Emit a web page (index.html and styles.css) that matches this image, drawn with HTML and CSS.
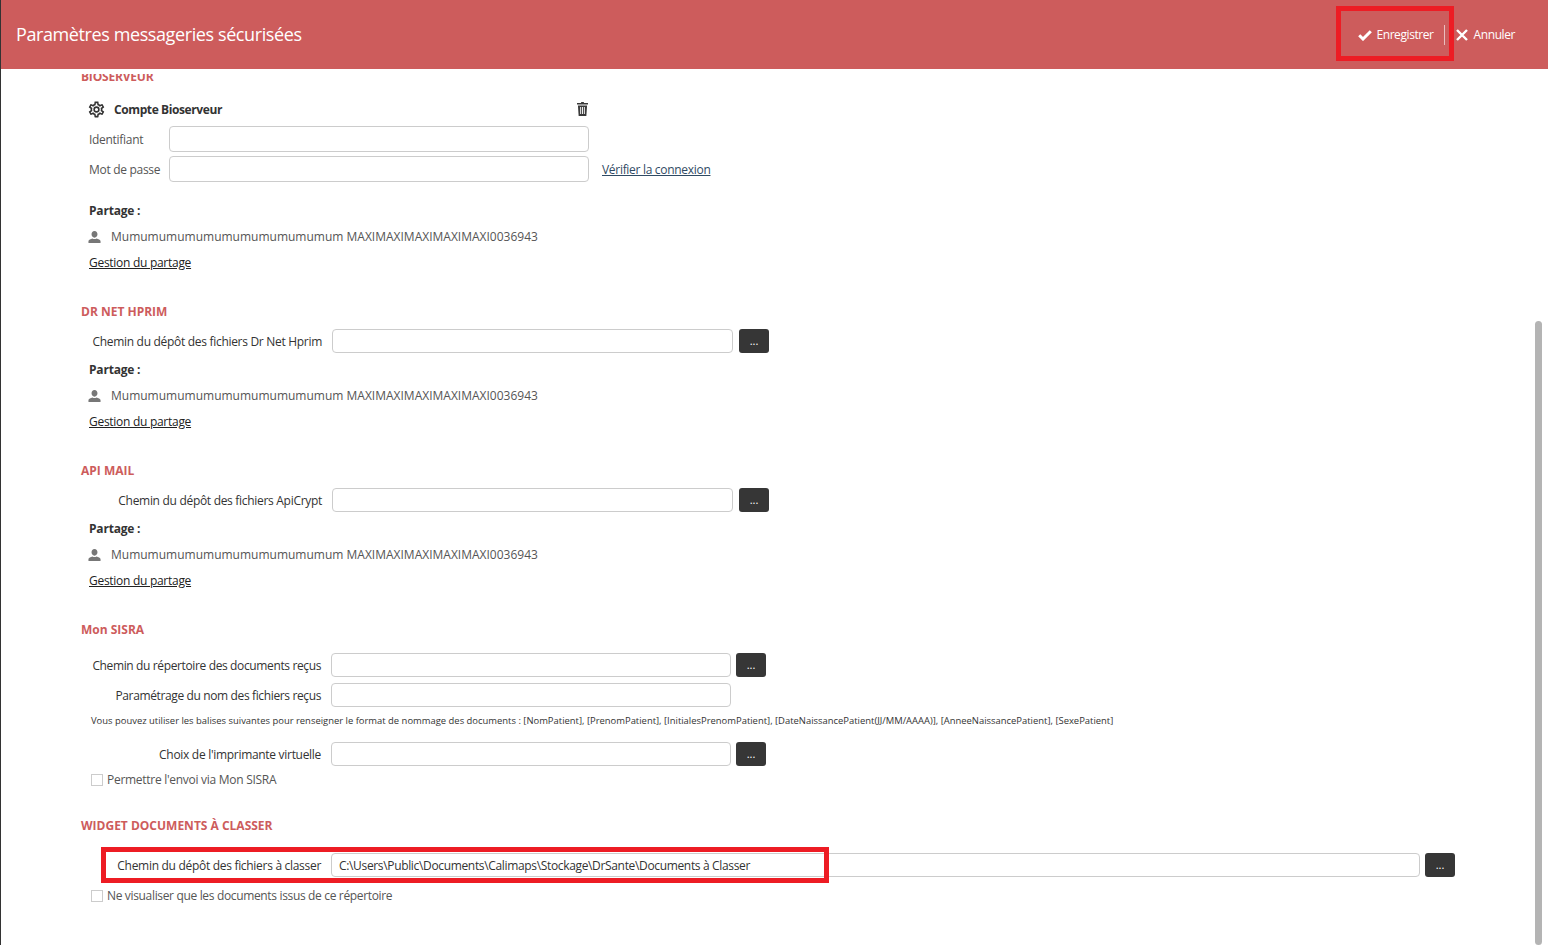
FILE: index.html
```html
<!DOCTYPE html>
<html lang="fr">
<head>
    <meta charset="UTF-8">
    <meta name="viewport" content="width=device-width, initial-scale=1.0">
    <title>Paramètres messageries sécurisées</title>
    <link rel="stylesheet" href="styles.css">
</head>
<body>
    <div class="window">
        <header class="topbar">
            <h1 class="topbar-title">Paramètres messageries sécurisées</h1>
            <div class="topbar-actions">
                <button class="action action-save" type="button">
                    <svg class="action-check" viewBox="0 0 14 12"><path d="M1.2 6.3 L5 10 L12.8 2.2" fill="none" stroke="#fff" stroke-width="3"/></svg>
                    Enregistrer
                </button>
                <span class="action-sep"></span>
                <button class="action" type="button">
                    <svg class="action-cross" viewBox="0 0 12 12"><path d="M1 1 L11 11 M11 1 L1 11" fill="none" stroke="#fff" stroke-width="2.4"/></svg>
                    Annuler
                </button>
            </div>
        </header>

        <main class="content">
            <section class="block block-first">
                <h2 class="block-title">BIOSERVEUR</h2>
                <div class="account">
                    <div class="account-head">
                        <svg class="icon-gear" viewBox="0 0 24 24"><path fill="#333" d="M12,8A4,4 0 0,1 16,12A4,4 0 0,1 12,16A4,4 0 0,1 8,12A4,4 0 0,1 12,8M12,10A2,2 0 0,0 10,12A2,2 0 0,0 12,14A2,2 0 0,0 14,12A2,2 0 0,0 12,10M10,22C9.75,22 9.54,21.82 9.5,21.58L9.13,18.93C8.5,18.68 7.96,18.34 7.44,17.94L4.95,18.95C4.73,19.03 4.46,18.95 4.34,18.73L2.34,15.27C2.21,15.05 2.27,14.78 2.46,14.63L4.57,12.97L4.5,12L4.57,11L2.46,9.37C2.27,9.22 2.21,8.95 2.34,8.73L4.34,5.27C4.46,5.05 4.73,4.96 4.95,5.05L7.44,6.05C7.96,5.66 8.5,5.32 9.13,5.07L9.5,2.42C9.54,2.18 9.75,2 10,2H14C14.25,2 14.46,2.18 14.5,2.42L14.87,5.07C15.5,5.32 16.04,5.66 16.56,6.05L19.05,5.05C19.27,4.96 19.54,5.05 19.66,5.27L21.66,8.73C21.79,8.95 21.73,9.22 21.54,9.37L19.43,11L19.5,12L19.43,13L21.54,14.63C21.73,14.78 21.79,15.05 21.66,15.27L19.66,18.73C19.54,18.95 19.27,19.04 19.05,18.95L16.56,17.95C16.04,18.34 15.5,18.68 14.87,18.93L14.5,21.58C14.46,21.82 14.25,22 14,22H10M11.25,4L10.88,6.61C9.68,6.86 8.62,7.5 7.85,8.39L5.44,7.35L4.69,8.65L6.8,10.2C6.4,11.37 6.4,12.64 6.8,13.8L4.68,15.36L5.43,16.66L7.86,15.62C8.63,16.5 9.68,17.14 10.87,17.38L11.24,20H12.76L13.13,17.39C14.32,17.14 15.37,16.5 16.14,15.62L18.57,16.66L19.32,15.36L17.2,13.81C17.6,12.64 17.6,11.37 17.2,10.2L19.31,8.65L18.56,7.35L16.15,8.39C15.38,7.5 14.32,6.86 13.12,6.62L12.75,4H11.25Z"/></svg>
                        <span class="account-name">Compte Bioserveur</span>
                        <svg class="icon-trash" viewBox="0 0 12 14" preserveAspectRatio="none"><path fill="#3a3a3a" fill-rule="evenodd" d="M4.5 0 H7.5 V1 H12 V2.6 H0 V1 H4.5 Z M1 3.4 H11 L10.2 14 H1.8 Z M3.5 5 V12 H4.5 V5 Z M5.5 5 V12 H6.5 V5 Z M7.5 5 V12 H8.5 V5 Z"/></svg>
                    </div>
                    <div class="login-row">
                        <label class="login-label">Identifiant</label>
                        <input class="login-input" type="text">
                    </div>
                    <div class="login-row">
                        <label class="login-label">Mot de passe</label>
                        <input class="login-input" type="password">
                        <a class="check-link" href="#">Vérifier la connexion</a>
                    </div>
                </div>
                <div class="share share-bio">
                    <div class="share-title">Partage :</div>
                    <div class="share-user">
                        <svg class="icon-user" viewBox="0 0 14 13" preserveAspectRatio="none"><path fill="#777" d="M7 0 C9 0 10.2 1.5 10.2 3.6 C10.2 5.6 9 7.2 7 7.2 C5 7.2 3.8 5.6 3.8 3.6 C3.8 1.5 5 0 7 0 Z M0.5 13 V10.8 C0.5 9.4 3 8.6 4.8 8 C6 8.8 8 8.8 9.2 8 C11 8.6 13.5 9.4 13.5 10.8 V13 Z"/></svg>
                        <span>Mumumumumumumumumumumumum MAXIMAXIMAXIMAXIMAXI0036943</span>
                    </div>
                    <a class="share-link" href="#">Gestion du partage</a>
                </div>
            </section>

            <section class="block">
                <h2 class="block-title">DR NET HPRIM</h2>
                <div class="field field-shift">
                    <label class="field-label">Chemin du dépôt des fichiers Dr Net Hprim</label>
                    <input class="field-input" type="text">
                    <button class="browse" type="button">...</button>
                </div>
                <div class="share">
                    <div class="share-title">Partage :</div>
                    <div class="share-user">
                        <svg class="icon-user" viewBox="0 0 14 13" preserveAspectRatio="none"><path fill="#777" d="M7 0 C9 0 10.2 1.5 10.2 3.6 C10.2 5.6 9 7.2 7 7.2 C5 7.2 3.8 5.6 3.8 3.6 C3.8 1.5 5 0 7 0 Z M0.5 13 V10.8 C0.5 9.4 3 8.6 4.8 8 C6 8.8 8 8.8 9.2 8 C11 8.6 13.5 9.4 13.5 10.8 V13 Z"/></svg>
                        <span>Mumumumumumumumumumumumum MAXIMAXIMAXIMAXIMAXI0036943</span>
                    </div>
                    <a class="share-link" href="#">Gestion du partage</a>
                </div>
            </section>

            <section class="block">
                <h2 class="block-title">API MAIL</h2>
                <div class="field field-shift">
                    <label class="field-label">Chemin du dépôt des fichiers ApiCrypt</label>
                    <input class="field-input" type="text">
                    <button class="browse" type="button">...</button>
                </div>
                <div class="share">
                    <div class="share-title">Partage :</div>
                    <div class="share-user">
                        <svg class="icon-user" viewBox="0 0 14 13" preserveAspectRatio="none"><path fill="#777" d="M7 0 C9 0 10.2 1.5 10.2 3.6 C10.2 5.6 9 7.2 7 7.2 C5 7.2 3.8 5.6 3.8 3.6 C3.8 1.5 5 0 7 0 Z M0.5 13 V10.8 C0.5 9.4 3 8.6 4.8 8 C6 8.8 8 8.8 9.2 8 C11 8.6 13.5 9.4 13.5 10.8 V13 Z"/></svg>
                        <span>Mumumumumumumumumumumumum MAXIMAXIMAXIMAXIMAXI0036943</span>
                    </div>
                    <a class="share-link" href="#">Gestion du partage</a>
                </div>
            </section>

            <section class="block">
                <h2 class="block-title block-title-sisra">Mon SISRA</h2>
                <div class="field">
                    <label class="field-label field-label-tight">Chemin du répertoire des documents reçus</label>
                    <input class="field-input" type="text">
                    <button class="browse" type="button">...</button>
                </div>
                <div class="field field-next">
                    <label class="field-label field-label-tight">Paramétrage du nom des fichiers reçus</label>
                    <input class="field-input" type="text">
                </div>
                <p class="hint">Vous pouvez utiliser les balises suivantes pour renseigner le format de nommage des documents : [NomPatient], [PrenomPatient], [InitialesPrenomPatient], [DateNaissancePatient(JJ/MM/AAAA)], [AnneeNaissancePatient], [SexePatient]</p>
                <div class="field">
                    <label class="field-label">Choix de l'imprimante virtuelle</label>
                    <input class="field-input" type="text">
                    <button class="browse" type="button">...</button>
                </div>
                <label class="check check-sisra"><span class="check-box"></span>Permettre l'envoi via Mon SISRA</label>
            </section>

            <section class="block block-widget">
                <h2 class="block-title block-title-widget">WIDGET DOCUMENTS À CLASSER</h2>
                <div class="field">
                    <label class="field-label">Chemin du dépôt des fichiers à classer</label>
                    <input class="field-input field-input-long" type="text" value="C:\Users\Public\Documents\Calimaps\Stockage\DrSante\Documents à Classer">
                    <button class="browse" type="button">...</button>
                </div>
                <label class="check check-widget"><span class="check-box"></span>Ne visualiser que les documents issus de ce répertoire</label>
            </section>
        </main>

        <div class="scroll-thumb"></div>
        <div class="mark mark-save"></div>
        <div class="mark mark-path"></div>
    </div>
</body>
</html>
```

FILE: styles.css
```css
* {
    box-sizing: border-box;
}
html, body {
    height: 100%;
    margin: 0;
    overflow: hidden;
}
body {
    font-family: "Open Sans", "Noto Sans", Arial, sans-serif;
    font-size: 12px;
    color: #333;
    background: #fff;
}
.window {
    position: relative;
    display: flex;
    flex-direction: column;
    height: 100vh;
    border-left: 1px solid #333;
}

/* top bar */
.topbar {
    flex: none;
    display: flex;
    justify-content: space-between;
    align-items: center;
    height: 69px;
    padding: 0 33px 0 15px;
    background: #cd5c5c;
    color: #fff;
}
.topbar-title {
    margin: 0 0 2px;
    font-size: 18px;
    font-weight: 400;
    letter-spacing: -0.4px;
}
.topbar-actions {
    display: flex;
    align-items: center;
}
.action {
    display: flex;
    align-items: center;
    padding: 0;
    border: none;
    background: none;
    color: #fff;
    font: inherit;
    letter-spacing: -0.42px;
}
.action-check {
    width: 14px;
    height: 12px;
    margin-right: 4px;
}
.action-cross {
    width: 12px;
    height: 12px;
    margin-right: 6px;
}
.action-sep {
    width: 1px;
    height: 20px;
    margin: 0 11px 0 10px;
    background: rgba(255, 255, 255, 0.6);
}

/* form */
.content {
    flex: 1;
    overflow: hidden;
    margin-top: 5px;
    padding-left: 80px;
}
.block {
    margin-top: 33px;
}
.block-first {
    margin-top: -5px;
}
.block-first .block-title {
    letter-spacing: -0.2px;
}
.block-widget {
    margin-top: 30px;
}
.block-title {
    margin: 0 0 9px;
    font-size: 12px;
    line-height: 16px;
    font-weight: 700;
    color: #cd5c5c;
}
.block-title-sisra {
    margin-bottom: 15px;
}
.block-title-widget {
    margin-bottom: 19px;
}

.account {
    margin-left: 8px;
    width: 500px;
}
.account-head {
    display: flex;
    align-items: center;
    height: 22px;
    margin-top: 13px;
    margin-bottom: 6px;
}
.icon-gear {
    width: 19px;
    height: 19px;
    margin-left: -2px;
}
.account-name {
    flex: 1;
    margin-left: 8px;
    font-weight: 700;
    letter-spacing: -0.4px;
}
.icon-trash {
    width: 11px;
    height: 14px;
    margin-right: 1px;
}
.login-row {
    display: flex;
    align-items: center;
    margin-top: 4px;
    white-space: nowrap;
    color: #555;
    letter-spacing: -0.3px;
}
.login-label {
    flex: none;
    width: 80px;
}
.login-input {
    flex: none;
    width: 420px;
    height: 26px;
    border: 1px solid #ccc;
    border-radius: 4px;
}
.check-link {
    margin-left: 13px;
    color: #2f4a63;
}

.share {
    margin: 9px 0 0 8px;
    line-height: 16px;
}
.share-bio {
    margin-top: 21px;
}
.share-title {
    font-weight: 700;
    letter-spacing: -0.2px;
}
.share-user {
    display: flex;
    align-items: center;
    margin-top: 10px;
    color: #555;
}
.icon-user {
    width: 13px;
    height: 12px;
    margin-left: -1px;
    margin-right: 10px;
}
.share-link {
    display: inline-block;
    margin-top: 10px;
    color: #222;
    letter-spacing: -0.28px;
}

.field {
    display: flex;
    align-items: center;
}
.field-next {
    margin-top: 6px;
}
.field-shift {
    padding-left: 1px;
}
.field-label {
    flex: none;
    width: 240px;
    margin-right: 10px;
    text-align: right;
    white-space: nowrap;
    letter-spacing: -0.3px;
}
.field-label-tight {
    letter-spacing: -0.37px;
}
.field-input {
    flex: none;
    width: 400px;
    height: 24px;
    padding: 0 7px;
    border: 1px solid #ccc;
    border-radius: 4px;
    font: inherit;
    letter-spacing: -0.34px;
    color: #333;
}
.field-input-long {
    width: 1089px;
}
.field-shift .field-input {
    width: 401px;
}
.browse {
    flex: none;
    width: 30px;
    height: 24px;
    margin-left: 5px;
    padding: 0;
    border: none;
    border-radius: 3px;
    background: #363636;
    color: #fff;
    font: inherit;
    font-size: 11px;
    line-height: 24px;
}
.field-shift .browse {
    margin-left: 6px;
}
.hint {
    margin: 6px 0 13px 10px;
    font-size: 9.43px;
    line-height: 16px;
    white-space: nowrap;
}
.check {
    display: flex;
    align-items: center;
    margin-left: 10px;
    line-height: 16px;
    color: #555;
    letter-spacing: -0.28px;
}
.check-sisra {
    margin-top: 6px;
}
.check-widget {
    margin-top: 11px;
    letter-spacing: -0.34px;
}
.check-box {
    width: 12px;
    height: 12px;
    margin-right: 4px;
    border: 1px solid #ccc;
}

/* overlays */
.scroll-thumb {
    position: absolute;
    top: 321px;
    bottom: 0;
    left: 1534px;
    width: 7px;
    border-radius: 4px;
    background: #b4b4b4;
}
.mark {
    position: absolute;
    border: 5px solid #ed1c24;
}
.mark-save {
    top: 6px;
    left: 1335px;
    width: 118px;
    height: 55px;
}
.mark-path {
    top: 847px;
    left: 100px;
    width: 728px;
    height: 36px;
}
```
